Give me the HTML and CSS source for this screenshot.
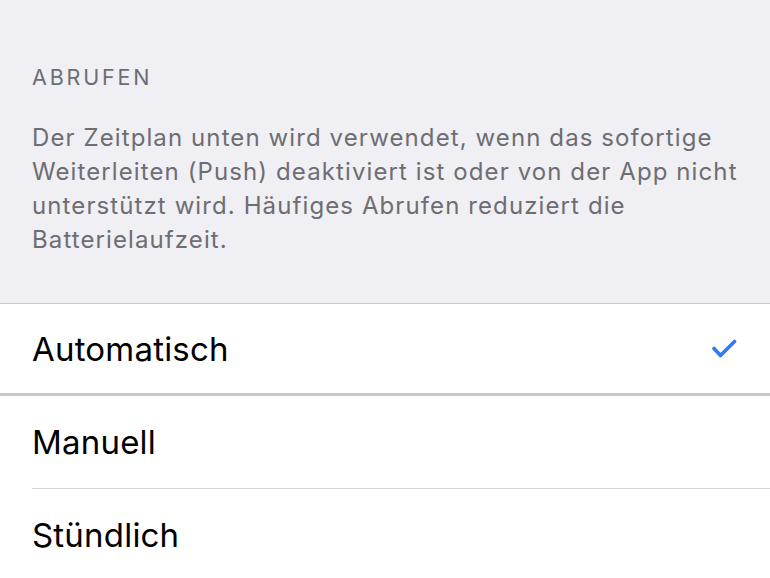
FILE: index.html
```html
<!DOCTYPE html>
<html lang="de">
<head>
  <meta charset="UTF-8">
  <title>Abrufen</title>
  <link rel="stylesheet" href="styles.css">
</head>
<body>

<!-- Kopfbereich mit Erklärung -->
<div class="section-header">
  <div class="section-title">ABRUFEN</div>
  <p class="section-note">Der Zeitplan unten wird verwendet, wenn das sofortige Weiterleiten (Push) deaktiviert ist oder von der App nicht unterstützt wird. Häufiges Abrufen reduziert die Batterielaufzeit.</p>
</div>

<!-- Auswahl -->
<ul class="options">
  <li class="option selected">
    <span>Automatisch</span>
    <svg class="check" width="26" height="20" viewBox="0 0 26 20">
      <path d="M3 9.5 L9.5 16.5 L23.5 2.5" fill="none" stroke="#2f7bf5" stroke-width="3.6" stroke-linecap="round" stroke-linejoin="round"/>
    </svg>
  </li>
  <li class="option">
    <span>Manuell</span>
  </li>
  <li class="option">
    <span>Stündlich</span>
  </li>
</ul>

</body>
</html>
```

FILE: styles.css
```css
body {
  margin: 0;
  font-family: Inter, "Noto Sans", sans-serif;
  background-color: #efeff4;
  width: 770px;
  height: 578px;
  overflow: hidden;
}
.section-header {
  padding: 65px 20px 0 32px;
  height: 303px;
  box-sizing: border-box;
  color: #6d6d72;
}
.section-title {
  font-size: 21.5px;
  line-height: 24px;
  letter-spacing: 2.8px;
}
.section-note {
  margin: 32px 0 0 0;
  font-size: 24px;
  line-height: 34px;
  letter-spacing: 1.1px;
}
.options {
  list-style-type: none;
  margin: 0;
  padding: 0;
  background-color: #fff;
  border-top: 1px solid #c8c7cc;
}
.option {
  display: flex;
  align-items: center;
  justify-content: space-between;
  height: 92px;
  padding-right: 33px;
  margin-left: 32px;
  font-size: 33px;
  letter-spacing: 0.2px;
  color: #000;
  border-bottom: 1px solid #d6d6da;
}
.option.selected {
  height: 89px;
  margin-left: 0;
  padding-left: 32px;
  border-bottom: 3px solid #c8c7cc;
}
.check {
  display: block;
}
```
